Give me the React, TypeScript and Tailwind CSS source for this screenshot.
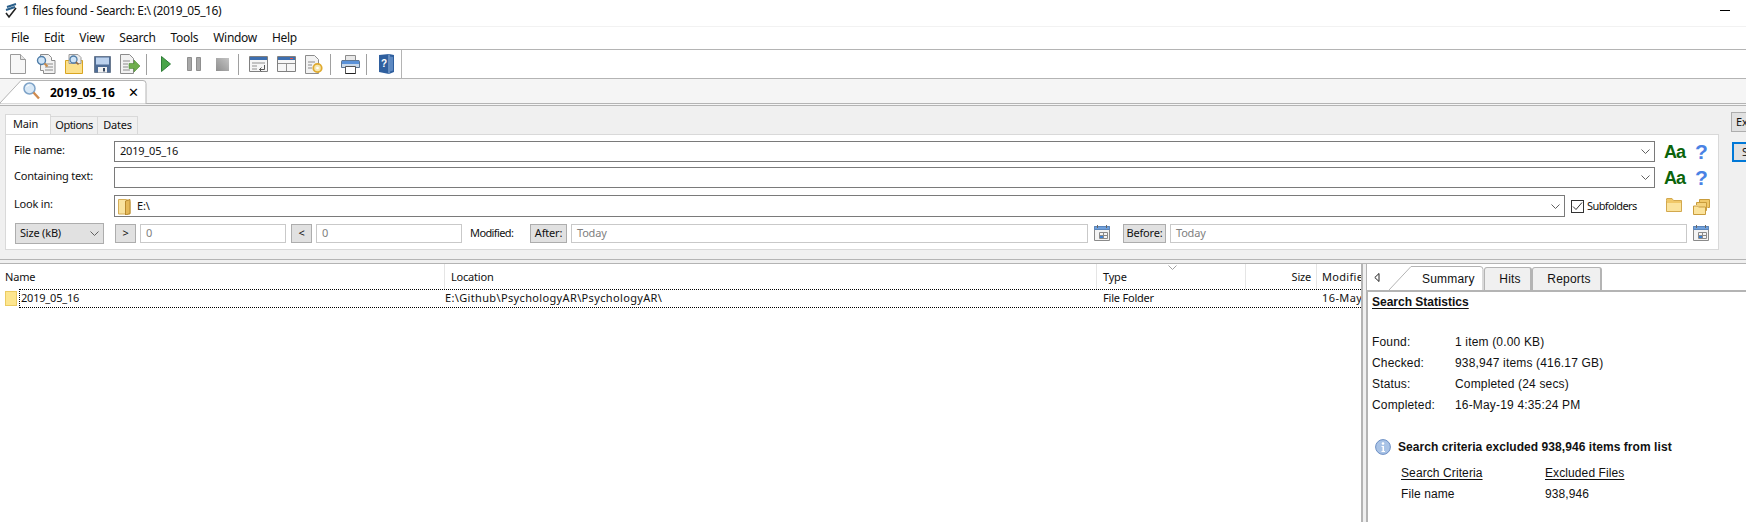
import type { ReactNode } from 'react'

const SEGOE = 'font-["Noto_Sans",sans-serif]'
const ARIAL = 'font-["Liberation_Sans",Arial,sans-serif]'

// ─── Icons ────────────────────────────────────────────────────────────────

function Svg({ w, h, children, className = '' }: { w: number; h: number; children: ReactNode; className?: string }) {
  return (
    <svg width={w} height={h} viewBox={`0 0 ${w} ${h}`} className={`shrink-0 ${className}`}>
      {children}
    </svg>
  )
}

const NewIcon = () => (
  <Svg w={16} h={20}>
    <path d="M.5.5h10l5 5v14H.5z" fill="#f7f7f7" stroke="#9a9a9a" />
    <path d="M10.5.5v5h5" fill="#e4e4e4" stroke="#9a9a9a" />
  </Svg>
)

const FindDocIcon = () => (
  <Svg w={20} h={20}>
    <path d="M4.5.5h8l3 3v3h3.5v13H7.5v-3h-3z" fill="#f2f2f2" stroke="#8c8c8c" />
    <path d="M9 10h8M9 13h8M9 16h8" stroke="#8c8c8c" />
    <circle cx="5.5" cy="6.5" r="4" fill="#cfe4f7" stroke="#4f7da8" strokeWidth="1.4" />
    <path d="M8.5 9.5l3 3" stroke="#c98b4a" strokeWidth="2" />
  </Svg>
)

const OpenSearchIcon = () => (
  <Svg w={18} h={20}>
    <path d="M.5 6.5h17v13H.5z" fill="#fbe08c" stroke="#d9a520" />
    <path d="M4 .5h9l3 3v6H4z" fill="#ececec" stroke="#9a9a9a" />
    <circle cx="8.5" cy="5.5" r="3.5" fill="#cfe4f7" stroke="#4f7da8" strokeWidth="1.3" />
    <path d="M11 8l2.5 2.5" stroke="#9a6a3a" strokeWidth="1.6" />
  </Svg>
)

const SaveIcon = () => (
  <Svg w={17} h={17}>
    <path d="M.5.5h16v16H.5z" fill="#4f6d96" stroke="#6a7a90" />
    <path d="M2 1.5h13v7H2z" fill="#bcd2ee" />
    <path d="M4 11h9v5.5H4z" fill="#f2f2f2" />
    <path d="M9 12h2v3.5H9z" fill="#35475f" />
  </Svg>
)

const ExportIcon = () => (
  <Svg w={20} h={20}>
    <path d="M.5.5h9l4 4v15H.5z" fill="#f2f2f2" stroke="#8c8c8c" />
    <path d="M3 7h7M3 10h5M3 13h5M3 16h7" stroke="#8c8c8c" />
    <path d="M9 9.5h5V6l6 6-6 6v-3.5H9z" fill="#6fae4d" stroke="#4e8a35" strokeWidth=".6" />
  </Svg>
)

const PlayIcon = () => (
  <Svg w={10} h={16}>
    <path d="M.5.5L9.5 8 .5 15.5z" fill="#4aa54a" stroke="#2f7d37" />
  </Svg>
)

const PauseIcon = () => (
  <Svg w={14} h={14}>
    <path d="M.5.5h4v13h-4zM9.5.5h4v13h-4z" fill="#a8a8a8" stroke="#8f8f8f" />
  </Svg>
)

const StopIcon = () => (
  <Svg w={13} h={13}>
    <defs>
      <linearGradient id="stop" x1="0" y1="1" x2="1" y2="0">
        <stop offset="0" stopColor="#8e8e8e" />
        <stop offset="1" stopColor="#c4c4c4" />
      </linearGradient>
    </defs>
    <rect width="13" height="13" fill="url(#stop)" />
  </Svg>
)

const WinReturnIcon = () => (
  <Svg w={19} h={16}>
    <path d="M.5.5h18v15H.5z" fill="#f6f6f6" stroke="#808080" />
    <path d="M1 1h17v3H1z" fill="#3d6fb0" />
    <path d="M3 7h13M3 10h5M3 13h5" stroke="#909090" />
    <path d="M15.5 9v4.5h-5M10.5 13.5l2-2M10.5 13.5l2 2" stroke="#555" fill="none" />
  </Svg>
)

const WinSplitIcon = () => (
  <Svg w={19} h={16}>
    <path d="M.5.5h18v15H.5z" fill="#f6f6f6" stroke="#808080" />
    <path d="M1 1h17v3H1z" fill="#3d6fb0" />
    <path d="M13 2h3v1h-3z" fill="#e0554a" />
    <path d="M1 7.5h17M9.5 8v7" stroke="#909090" />
  </Svg>
)

const DocGearIcon = () => (
  <Svg w={18} h={19}>
    <path d="M.5.5h9l4 4v14H.5z" fill="#f2f2f2" stroke="#8c8c8c" />
    <path d="M3 7h7M3 10h4M3 13h4" stroke="#8c8c8c" />
    <circle cx="12.5" cy="13" r="4.2" fill="#f6e7b0" stroke="#e0aa2e" strokeWidth="1.8" />
    <circle cx="12.5" cy="13" r="1.3" fill="#fff" />
  </Svg>
)

const PrintIcon = () => (
  <Svg w={19} h={19}>
    <path d="M4.5.5h10v6h-10z" fill="#e8e8e8" stroke="#8c8c8c" />
    <path d="M1 5.5h17a1 1 0 0 1 .5 1v6h-18v-6a1 1 0 0 1 .5-1z" fill="#5b92d8" stroke="#5f7690" />
    <path d="M1 9h17v3H1z" fill="#c9d9ea" />
    <path d="M4.5 11.5h10v7h-10z" fill="#fff" stroke="#555" />
    <path d="M4.5 18.5h10" stroke="#222" />
  </Svg>
)

const HelpBookIcon = () => (
  <Svg w={15} h={20}>
    <path d="M0 1l10-1 5 1v17l-5 2-10-2z" fill="#2f5f9e" />
    <path d="M10 .5v19" stroke="#9fbde0" />
    <path d="M11 2.5l3 .5v13.5l-3 1z" fill="#5d89c2" />
    <text x="5" y="13" fontSize="10" fontWeight="700" fill="#fff" textAnchor="middle" fontFamily="Liberation Sans">?</text>
  </Svg>
)

const MagnifierIcon = () => (
  <Svg w={17} h={18}>
    <circle cx="6.5" cy="6.5" r="5.5" fill="#d8e8f6" stroke="#7ea3c8" strokeWidth="1.5" />
    <path d="M3.5 5a3.5 3.5 0 0 1 3-2" stroke="#fff" fill="none" />
    <path d="M10.5 10.5l5.5 6" stroke="#cf8a4e" strokeWidth="2.4" />
  </Svg>
)

const Chevron = () => (
  <Svg w={9} h={5}>
    <path d="M.5.5L4.5 4.5 8.5.5" stroke="#606060" fill="none" />
  </Svg>
)

const FolderIcon = () => (
  <Svg w={16} h={14}>
    <path d="M.5 2.5V1a.5.5 0 0 1 .5-.5h5l1.5 2h8v11H.5z" fill="#f0c868" stroke="#d2a84e" />
    <path d="M1 5h14v8H1z" fill="#fbe39c" />
  </Svg>
)

const FoldersIcon = () => (
  <Svg w={17} h={17}>
    <path d="M6.5 4V1.5h10v8h-2" fill="#f0c868" stroke="#c99c3c" />
    <path d="M3.5 7V4.5h10v8h-2" fill="#f4d27c" stroke="#c99c3c" />
    <path d="M.5 8h4l1 1h7v7.5H.5z" fill="#fbe39c" stroke="#c99c3c" />
  </Svg>
)

const LookInFolder = () => (
  <Svg w={13} h={17}>
    <path d="M.5 1.5h8l3.5 2v12.5H.5z" fill="#f9e3a0" stroke="#d4ad58" />
    <path d="M7.5 3l4.5-1.5v14l-4.5 1.5z" fill="#e4b858" stroke="#b88a30" />
  </Svg>
)

const CalendarIcon = () => (
  <Svg w={16} h={16}>
    <path d="M.5 1.5h15v14H.5z" fill="#f4f4f4" stroke="#8a8a8a" />
    <path d="M.5 1.5h15v3H.5z" fill="#6fa0dc" stroke="#5b86bc" />
    <path d="M3.5 0v3M12.5 0v3" stroke="#666" />
    <path d="M5.5 7.5h8v6h-8zM9.5 7.5v6M5.5 10.5h8" stroke="#8a8a8a" fill="none" />
    <path d="M6 11h3v2H6z" fill="#3d82d6" />
  </Svg>
)

const InfoIcon = () => (
  <Svg w={16} h={16}>
    <circle cx="8" cy="8" r="7.4" fill="#a9c3e6" stroke="#6d8fc4" />
    <circle cx="8" cy="4.5" r="1.3" fill="#fff" />
    <path d="M6.5 7h2.5v5h1v1H6.5v-1h1V8h-1z" fill="#fff" />
  </Svg>
)

// ─── Small parts ──────────────────────────────────────────────────────────

function ToolBtn({ children }: { children: ReactNode }) {
  return <div className="flex h-full w-[28px] items-center justify-center">{children}</div>
}

function ToolSep() {
  return <div className="ml-[2px] mr-[5px] h-[21px] w-px bg-[#a0a0a0]" />
}

function CaseAndHelp() {
  return (
    <div className="ml-[9px] flex h-[21px] items-center">
      <span className={`${ARIAL} w-[19px] text-[18px] font-bold leading-none tracking-[-1px] text-[#0b640b]`}>Aa</span>
      <span className={`${ARIAL} ml-[12px] text-[21px] font-bold leading-none text-[#4a82e4]`}>?</span>
    </div>
  )
}

function FieldLabel({ children }: { children: ReactNode }) {
  return <div className="w-[100px] shrink-0 pt-px">{children}</div>
}

function SmallBtn({ w, children }: { w: string; children: ReactNode }) {
  return (
    <div className={`flex h-[19px] shrink-0 items-center justify-center border border-[#adadad] bg-[#e1e1e1] ${w}`}>
      {children}
    </div>
  )
}

function GhostInput({ w, children }: { w: string; children: ReactNode }) {
  return (
    <div className={`flex h-[19px] shrink-0 items-center border border-[#c9c9c9] bg-white pl-[5px] text-[#808080] ${w}`}>
      {children}
    </div>
  )
}

function TextCombo({ children }: { children?: ReactNode }) {
  return (
    <div className="flex h-[21px] w-[1541px] shrink-0 items-center justify-between border border-[#7a7a7a] bg-white pl-[5px] pr-[4px]">
      <span>{children}</span>
      <Chevron />
    </div>
  )
}

function SideTab({ w, children }: { w: string; children: ReactNode }) {
  return (
    <div className={`flex h-[23px] items-center justify-center rounded-t-[3px] border border-b-0 border-r-2 border-[#b4b4b4] bg-[#f0f0f0] pl-[5px] tracking-[0.2px] ${w}`}>
      {children}
    </div>
  )
}

function StatRow({ label, value }: { label: string; value: string }) {
  return (
    <div className="flex h-[21px] items-center tracking-[0.17px]">
      <span className="w-[83px]">{label}</span>
      <span>{value}</span>
    </div>
  )
}

const MENU = ['File', 'Edit', 'View', 'Search', 'Tools', 'Window', 'Help']

// ─── App ──────────────────────────────────────────────────────────────────

export default function App() {
  return (
    <div className={`${SEGOE} flex h-[522px] w-[1746px] flex-col overflow-hidden bg-white text-[11px] tracking-[-0.2px] text-[#111]`}>
      {/* Title bar */}
      <div className="flex h-[27px] shrink-0 items-center border-b border-[#f2f2f2] pb-[5px] pl-[4px] pr-[16px]">
        <svg width="15" height="16" viewBox="0 0 15 16" className="mr-[4px]">
          <path d="M3 4l9-3M2 7l9-3" stroke="#2a5f8a" strokeWidth="2" />
          <path d="M2 10l3 4 7-9" stroke="#222" strokeWidth="1.6" fill="none" />
        </svg>
        <span className="text-[12px] tracking-[-0.4px]">1 files found - Search: E:\ (2019_05_16)</span>
        <div className="ml-auto h-px w-[10px] bg-black" />
      </div>

      {/* Menu */}
      <div className="flex h-[23px] shrink-0 items-center gap-[15px] border-b border-[#b4b4b4] pl-[11px] text-[12px] tracking-[-0.3px]">
        {MENU.map(m => (
          <span key={m}>{m}</span>
        ))}
      </div>

      {/* Toolbar */}
      <div className="flex h-[29px] shrink-0 items-center border-b border-[#b4b4b4]">
        <div className="flex h-full w-[402px] items-center border-r border-[#b4b4b4] pl-[4px]">
          <ToolBtn><NewIcon /></ToolBtn>
          <ToolBtn><FindDocIcon /></ToolBtn>
          <ToolBtn><OpenSearchIcon /></ToolBtn>
          <ToolBtn><SaveIcon /></ToolBtn>
          <ToolBtn><ExportIcon /></ToolBtn>
          <ToolSep />
          <ToolBtn><PlayIcon /></ToolBtn>
          <ToolBtn><PauseIcon /></ToolBtn>
          <ToolBtn><StopIcon /></ToolBtn>
          <ToolSep />
          <ToolBtn><WinReturnIcon /></ToolBtn>
          <ToolBtn><WinSplitIcon /></ToolBtn>
          <ToolBtn><DocGearIcon /></ToolBtn>
          <ToolSep />
          <ToolBtn><PrintIcon /></ToolBtn>
          <ToolSep />
          <ToolBtn><HelpBookIcon /></ToolBtn>
        </div>
      </div>

      {/* Document tab strip */}
      <div className="flex h-[27px] shrink-0 border-b-[3px] border-double border-[#b4b4b4] bg-[#f5f5f5]">
        <div className="relative flex h-[25px] w-[147px] shrink-0 items-center">
          <svg width="147" height="25" className="absolute inset-0">
            <path d="M0 24L21 1.5h122a3 3 0 0 1 3 3V25H0z" fill="#fff" stroke="#b4b4b4" />
          </svg>
          <div className="relative ml-[23px] mb-[2px]"><MagnifierIcon /></div>
          <span className="relative ml-[10px] mt-[2px] text-[12px] font-bold tracking-normal text-black">2019_05_16</span>
          <span className="relative ml-[13px] mt-[2px] text-[13px] text-black">✕</span>
        </div>
      </div>

      {/* Search panel */}
      <div className="flex h-[154px] shrink-0 border-b border-[#b4b4b4] bg-[#f0f0f0] pl-[5px]">
        <div className="w-[1714px] shrink-0 pt-[8px]">
          <div className="flex h-[20px] items-end">
            <div className="flex h-[20px] w-[46px] items-center border border-b-0 border-[#d9d9d9] bg-white pl-[7px]">Main</div>
            <div className="flex h-[18px] w-[47px] items-center justify-center border-r border-t border-[#d9d9d9] tracking-[-0.5px]">Options</div>
            <div className="flex h-[18px] w-[40px] items-center justify-center border-r border-t border-[#d9d9d9]">Dates</div>
          </div>
          <div className="h-[116px] border border-[#d9d9d9] bg-white pl-[8px] pt-[6px]">
            <div className="flex h-[26px] items-start">
              <FieldLabel>File name:</FieldLabel>
              <TextCombo>2019_05_16</TextCombo>
              <CaseAndHelp />
            </div>
            <div className="flex h-[28px] items-start">
              <FieldLabel>Containing text:</FieldLabel>
              <TextCombo />
              <CaseAndHelp />
            </div>
            <div className="flex h-[27px] items-start">
              <FieldLabel>Look in:</FieldLabel>
              <div className="flex h-[22px] w-[1451px] shrink-0 items-center justify-between border border-[#7a7a7a] bg-white pl-[3px] pr-[4px]">
                <span className="flex items-center gap-[6px]"><LookInFolder /> E:\</span>
                <Chevron />
              </div>
              <div className="ml-[6px] flex h-[22px] w-[66px] shrink-0 items-center tracking-[-0.6px]">
                <div className="mr-[3px] flex h-[13px] w-[13px] shrink-0 items-center justify-center border border-[#333] bg-white">
                  <svg width="11" height="9" viewBox="0 0 11 9"><path d="M1 4.5l3 3 6-7" stroke="#333" fill="none" /></svg>
                </div>
                Subfolders
              </div>
              <div className="ml-[29px] mt-[3px] flex gap-[11px]">
                <FolderIcon />
                <FoldersIcon />
              </div>
            </div>
            <div className="flex h-[22px] items-center pl-px">
              <div className="flex h-[21px] w-[89px] shrink-0 items-center justify-between border border-[#adadad] bg-[#e1e1e1] pl-[4px] pr-[4px]">
                Size (kB)
                <Chevron />
              </div>
              <SmallBtn w="ml-[11px] w-[21px]">&gt;</SmallBtn>
              <GhostInput w="ml-[4px] w-[146px]">0</GhostInput>
              <SmallBtn w="ml-[5px] w-[21px]">&lt;</SmallBtn>
              <GhostInput w="ml-[4px] w-[146px]">0</GhostInput>
              <span className="ml-[8px] w-[60px] shrink-0 tracking-[-0.6px]">Modified:</span>
              <SmallBtn w="w-[37px]">After:</SmallBtn>
              <GhostInput w="ml-[4px] w-[517px]">Today</GhostInput>
              <div className="ml-[6px]"><CalendarIcon /></div>
              <SmallBtn w="ml-[13px] w-[43px]">Before:</SmallBtn>
              <GhostInput w="ml-[4px] w-[517px]">Today</GhostInput>
              <div className="ml-[6px]"><CalendarIcon /></div>
            </div>
          </div>
        </div>
        <div className="ml-[12px] flex flex-col pt-[6px]">
          <div className="h-[20px] w-[40px] border border-[#adadad] bg-[#e1e1e1] pl-[4px] leading-[18px]">Ex</div>
          <div className="ml-px mt-[10px] h-[20px] w-[40px] border-2 border-[#0078d7] bg-[#e1e1e1] pl-[8px] leading-[15px]">S</div>
        </div>
      </div>

      {/* Splitter gap */}
      <div className="h-[3px] shrink-0 bg-[#f0f0f0]" />

      {/* Results + side panel */}
      <div className="flex min-h-0 flex-1 border-t border-[#b4b4b4]">
        <div className="flex w-[1363px] shrink-0 flex-col overflow-hidden border-r-2 border-[#b4b4b4]">
          <div className="relative flex h-[25px] shrink-0 items-center">
            <div className="w-[445px] shrink-0 border-r border-[#e5e5e5] pl-[5px] leading-[25px]">Name</div>
            <div className="w-[652px] shrink-0 border-r border-[#e5e5e5] pl-[6px] leading-[25px]">Location</div>
            <div className="w-[149px] shrink-0 border-r border-[#e5e5e5] pl-[6px] leading-[25px]">Type</div>
            <div className="w-[71px] shrink-0 border-r border-[#e5e5e5] pr-[5px] text-right leading-[25px]">Size</div>
            <div className="w-[44px] shrink-0 overflow-hidden whitespace-nowrap pl-[5px] leading-[25px] tracking-[0.3px]">Modified</div>
            <svg width="9" height="5" className="absolute left-[1168px] top-[1px]">
              <path d="M.5.5L4.5 4.5 8.5.5" stroke="#a0a0a0" fill="none" />
            </svg>
          </div>
          <div className="flex h-[19px] shrink-0 items-center">
            <div className="flex h-full w-[19px] shrink-0 items-center pl-[5px]">
              <div className="h-[15px] w-[12px] border border-[#ebcb62] bg-[#fde68f]" />
            </div>
            <div className="flex h-full w-[1342px] shrink-0 items-center border-y border-l border-dotted border-black">
              <span className="w-[425px] shrink-0 pl-px">2019_05_16</span>
              <span className="w-[658px] shrink-0 tracking-[0.35px]">E:\Github\PsychologyAR\PsychologyAR\</span>
              <span className="w-[219px] shrink-0">File Folder</span>
              <span className="overflow-hidden whitespace-nowrap tracking-[0.4px]">16-May-19</span>
            </div>
          </div>
        </div>

        <div className="w-[3px] shrink-0 bg-[#f0f0f0]" />

        <div className={`${ARIAL} flex min-w-0 flex-1 flex-col border-l border-[#b4b4b4] text-[12px] tracking-normal`}>
          <div className="flex h-[28px] shrink-0 items-end border-b-2 border-[#b4b4b4] pl-[1px]">
            <svg width="6" height="10" className="mb-[7px] ml-[6px]">
              <path d="M5 .5v8L.8 4.5z" fill="#fff" stroke="#222" />
            </svg>
            <div className="relative ml-[9px] flex h-[24px] w-[95px] shrink-0 items-center">
              <svg width="95" height="24" className="absolute inset-0">
                <path d="M0 24L22 .5h69a3 3 0 0 1 3 3V24" fill="#fff" stroke="#b4b4b4" />
              </svg>
              <span className="relative ml-[33px] mt-[2px] tracking-[0.2px]">Summary</span>
            </div>
            <SideTab w="w-[48px]">Hits</SideTab>
            <SideTab w="w-[70px]">Reports</SideTab>
          </div>
          <div className="min-h-0 flex-1 border-l border-[#b4b4b4] pl-[4px]">
            <div className="h-[20px] text-[12px] font-bold leading-[20px] underline underline-offset-2">Search Statistics</div>
            <div className="mt-[19px]">
              <StatRow label="Found:" value="1 item (0.00 KB)" />
              <StatRow label="Checked:" value="938,947 items (416.17 GB)" />
              <StatRow label="Status:" value="Completed (24 secs)" />
              <StatRow label="Completed:" value="16-May-19 4:35:24 PM" />
            </div>
            <div className="mt-[22px] flex h-[20px] items-center pl-[3px] font-bold tracking-[0.06px]">
              <InfoIcon />
              <span className="ml-[7px]">Search criteria excluded 938,946 items from list</span>
            </div>
            <div className="ml-[29px] mt-[5px] flex h-[21px] items-center tracking-[0.1px] underline underline-offset-2">
              <span className="w-[144px]">Search Criteria</span>
              <span>Excluded Files</span>
            </div>
            <div className="ml-[29px] flex h-[21px] items-center tracking-[0.1px]">
              <span className="w-[144px]">File name</span>
              <span>938,946</span>
            </div>
          </div>
        </div>
      </div>
    </div>
  )
}
